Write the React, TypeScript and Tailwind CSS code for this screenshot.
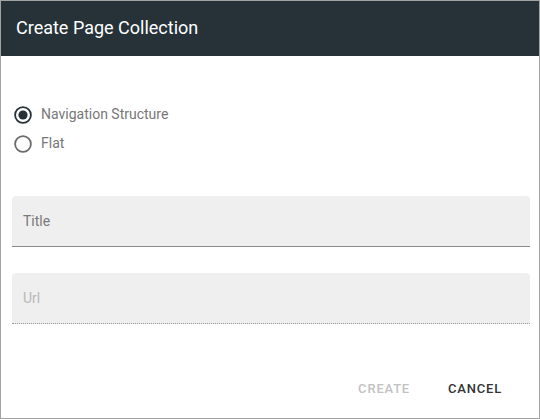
import React, { useState } from 'react';

export default function App() {
  const [tipo, setTipo] = useState<'nav' | 'flat'>('nav');

  const Radio = ({ checked, label, onClick }: { checked: boolean; label: string; onClick: () => void }) => (
    <button type="button" onClick={onClick} className="flex items-center h-[29px] gap-[8px] text-left">
      <svg width="20" height="20" viewBox="0 0 20 20">
        <circle cx="10" cy="10" r="7.9" fill="none" stroke={checked ? '#263238' : '#6b6b6b'} strokeWidth="1.8" />
        {checked && <circle cx="10" cy="10" r="4.6" fill="#263238" />}
      </svg>
      <span className="text-[14px] text-[#777]">{label}</span>
    </button>
  );

  return (
    <div className="w-[540px] h-[419px] bg-white border border-[#a3a3a3] flex flex-col font-['Roboto',sans-serif]">
      <div className="h-[55px] bg-[#263238] flex items-center px-[15px] pb-[2px] shrink-0">
        <h1 className="text-[18px] text-white leading-none">Create Page Collection</h1>
      </div>

      <div className="flex-1 flex flex-col pl-[11px] pr-[9px]">
        <div className="flex flex-col pt-[44px] pl-[1px]">
          <Radio checked={tipo === 'nav'} label="Navigation Structure" onClick={() => setTipo('nav')} />
          <Radio checked={tipo === 'flat'} label="Flat" onClick={() => setTipo('flat')} />
        </div>

        <div className="mt-[38px] h-[51px] bg-[#efefef] rounded-t-[4px] border-b border-[#8a8a8a] flex items-center px-[11px]">
          <span className="text-[14px] text-[#7a7a7a]">Title</span>
        </div>

        <div className="mt-[26px] h-[51px] bg-[#efefef] rounded-t-[4px] border-b border-dotted border-[#9a9a9a] flex items-center px-[11px]">
          <span className="text-[14px] text-[#b8b8b8]">Url</span>
        </div>

        <div className="flex-1 flex items-end justify-end pb-[20px] pr-[28px] gap-[38px]">
          <button type="button" disabled className="text-[13px] font-medium tracking-[0.8px] text-[#c2c2c2]">
            CREATE
          </button>
          <button type="button" className="text-[13px] font-medium tracking-[0.8px] text-[#333]">
            CANCEL
          </button>
        </div>
      </div>
    </div>
  );
}
